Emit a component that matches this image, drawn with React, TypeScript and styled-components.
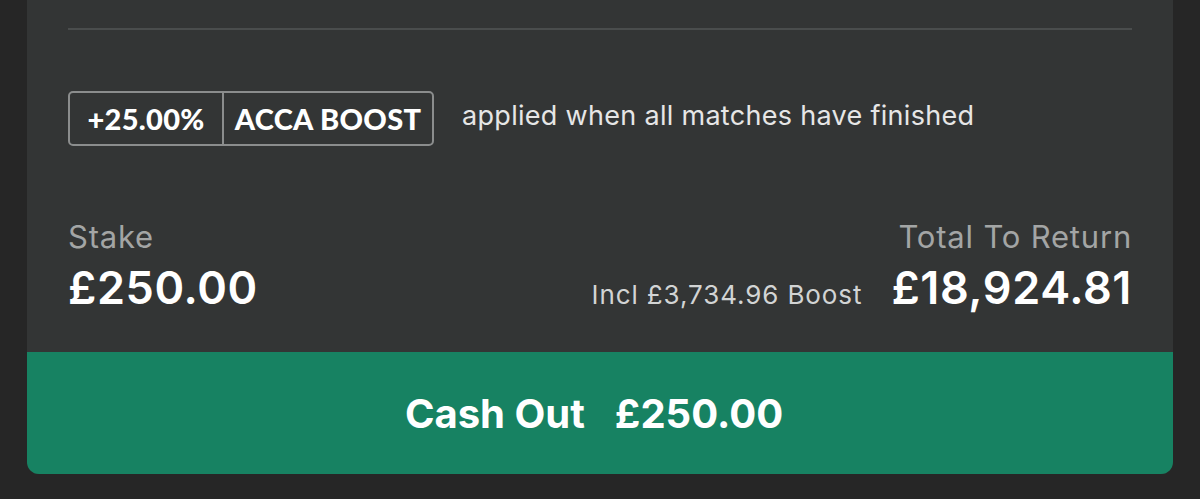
import React from "react";
import styled, { createGlobalStyle } from "styled-components";

const Global = createGlobalStyle`
  html, body { margin: 0; padding: 0; background: #262626; }
  body { font-family: Inter, "Liberation Sans", sans-serif; }
`;

const Page = styled.div`
  width: 1200px;
  height: 499px;
  box-sizing: border-box;
  padding: 0 27px 25px 27px;
  background: #262626;
  display: flex;
  flex-direction: column;
`;

const Card = styled.div`
  flex: 1;
  background: #333535;
  border-radius: 0 0 12px 12px;
  overflow: hidden;
  display: flex;
  flex-direction: column;
`;

const Body = styled.div`
  flex: 1;
  padding: 28px 41px 0 41px;
  display: flex;
  flex-direction: column;
`;

const Divider = styled.div`
  height: 2px;
  background: #4a4d4d;
`;

const BoostRow = styled.div`
  margin-top: 61px;
  display: flex;
  align-items: center;
  gap: 28px;
`;

const Badge = styled.div`
  display: flex;
  height: 55px;
  box-sizing: border-box;
  border: 2px solid #8b8d8d;
  border-radius: 5px;
`;

const BadgeCell = styled.div<{ $w: number; $divider?: boolean }>`
  width: ${(p) => p.$w}px;
  display: flex;
  align-items: center;
  justify-content: center;
  font-family: Lato, "DejaVu Sans", sans-serif;
  font-weight: 900;
  font-size: 29px;
  letter-spacing: 0.3px;
  color: #ffffff;
  border-left: ${(p) => (p.$divider ? "2px solid #8b8d8d" : "none")};
`;

const BoostNote = styled.div`
  font-size: 27px;
  color: #e6e6e6;
  letter-spacing: 0.3px;
  margin-bottom: 6px;
`;

const Totals = styled.div`
  margin-top: 73px;
  display: flex;
  justify-content: space-between;
  align-items: flex-end;
`;

const Col = styled.div<{ $right?: boolean }>`
  display: flex;
  flex-direction: column;
  align-items: ${(p) => (p.$right ? "flex-end" : "flex-start")};
`;

const Label = styled.div`
  font-size: 31px;
  color: #a3a5a5;
  line-height: 36px;
  letter-spacing: 0.8px;
`;

const AmountRow = styled.div`
  display: flex;
  align-items: baseline;
  gap: 29px;
  margin-top: 7px;
`;

const Amount = styled.div`
  font-size: 45px;
  font-weight: 600;
  color: #ffffff;
  line-height: 52px;
  letter-spacing: 0.6px;
`;

const Incl = styled.div`
  font-size: 26px;
  color: #d2d4d4;
  letter-spacing: 0.9px;
`;

const CashOut = styled.button`
  height: 122px;
  border: none;
  background: #178262;
  color: #ffffff;
  font-family: Inter, "Liberation Sans", sans-serif;
  font-size: 40px;
  font-weight: 700;
  display: flex;
  align-items: center;
  justify-content: center;
  gap: 30px;
  padding: 0 12px 0 0;
`;

export default function App() {
  return (
    <>
      <Global />
      <Page>
        <Card>
          <Body>
            <Divider />
            <BoostRow>
              <Badge>
                <BadgeCell $w={152}>+25.00%</BadgeCell>
                <BadgeCell $w={208} $divider>ACCA BOOST</BadgeCell>
              </Badge>
              <BoostNote>applied when all matches have finished</BoostNote>
            </BoostRow>
            <Totals>
              <Col>
                <Label>Stake</Label>
                <AmountRow>
                  <Amount>£250.00</Amount>
                </AmountRow>
              </Col>
              <Col $right>
                <Label>Total To Return</Label>
                <AmountRow>
                  <Incl>Incl £3,734.96 Boost</Incl>
                  <Amount>£18,924.81</Amount>
                </AmountRow>
              </Col>
            </Totals>
          </Body>
          <CashOut>
            <span>Cash Out</span>
            <span>£250.00</span>
          </CashOut>
        </Card>
      </Page>
    </>
  );
}
